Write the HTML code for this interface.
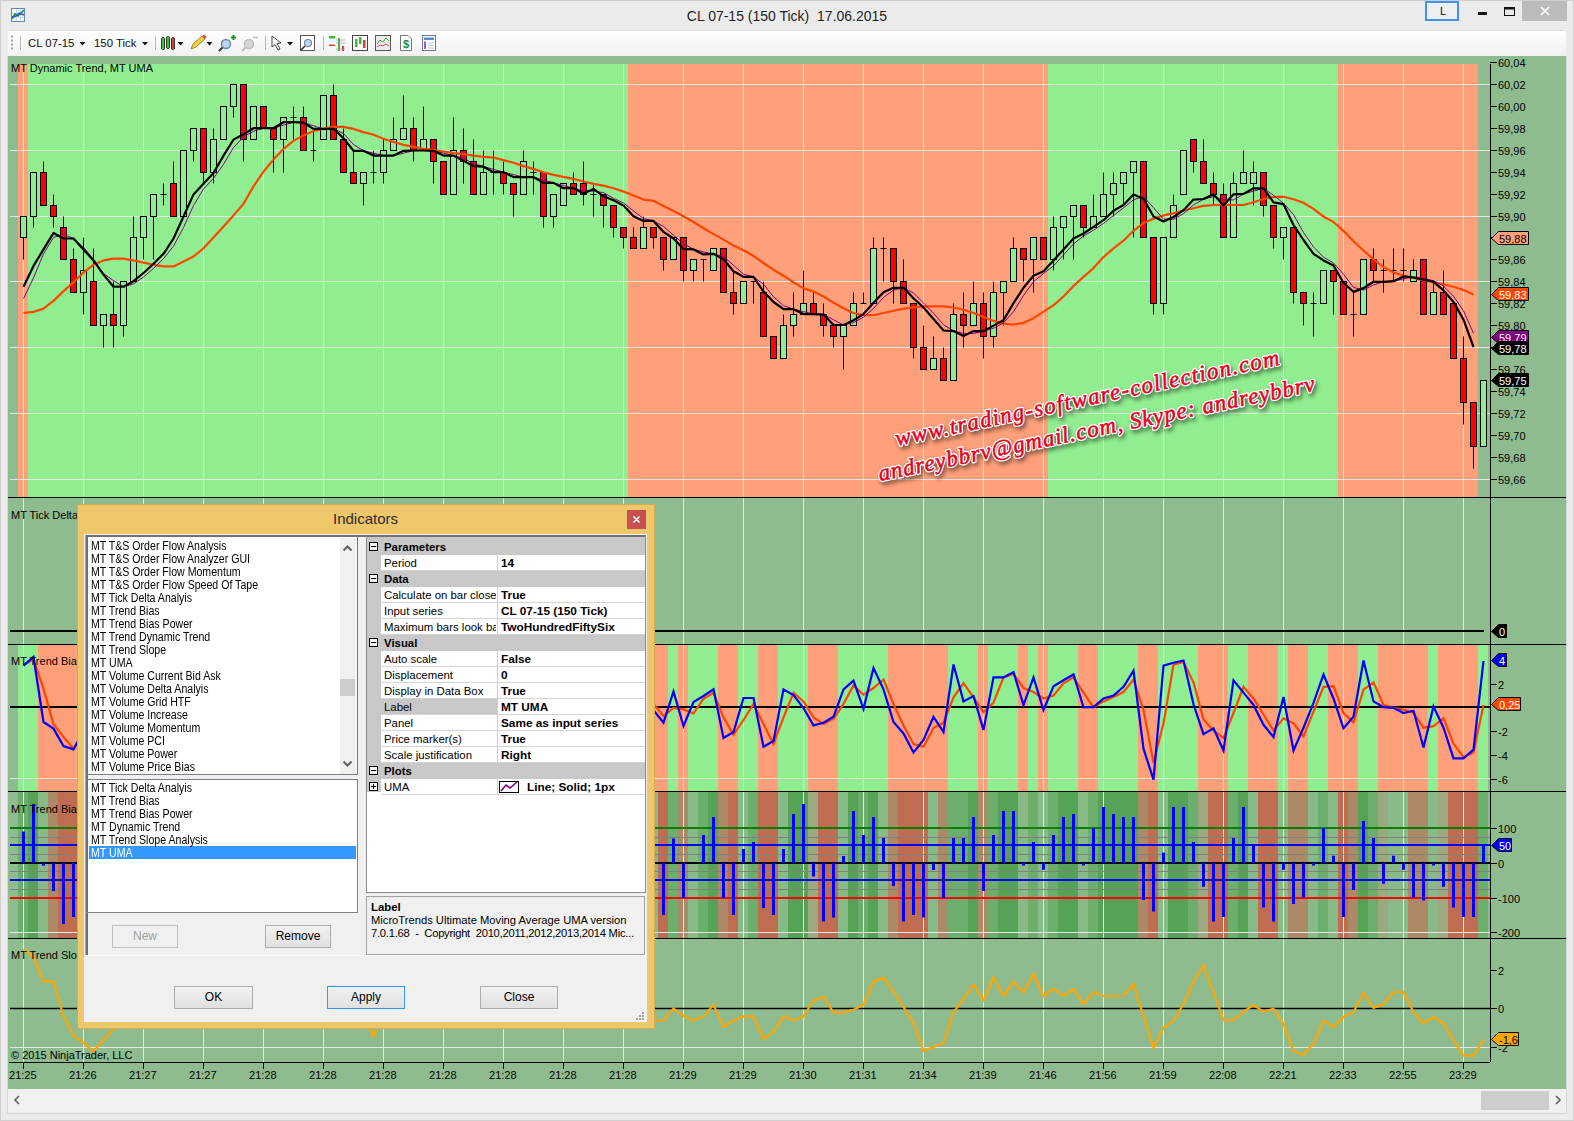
<!DOCTYPE html>
<html><head><meta charset="utf-8"><title>CL 07-15</title>
<style>
html,body{margin:0;padding:0;}
body{width:1574px;height:1121px;overflow:hidden;position:relative;background:#ebebeb;font-family:"Liberation Sans",sans-serif;}
svg{font-family:"Liberation Sans",sans-serif;}
.abs{position:absolute;}
</style></head><body>
<svg class="abs" style="left:0;top:0" width="1574" height="1121" viewBox="0 0 1574 1121">
<rect x="0" y="0" width="1574" height="1121" fill="#ebebeb"/>
<rect x="0.5" y="0.5" width="1573" height="1120" fill="none" stroke="#cfcfcf"/>
<defs><linearGradient id="tb" x1="0" y1="0" x2="0" y2="1"><stop offset="0" stop-color="#ffffff"/><stop offset="1" stop-color="#f0f0f0"/></linearGradient></defs>
<rect x="8" y="31" width="1558" height="25" fill="url(#tb)"/>
<rect x="8" y="56" width="1558" height="1033" fill="#8fbc8f"/>
<rect x="18" y="64" width="10" height="433" fill="#ffa07a"/>
<rect x="28" y="64" width="600" height="433" fill="#90ee90"/>
<rect x="628" y="64" width="420" height="433" fill="#ffa07a"/>
<rect x="1048" y="64" width="290" height="433" fill="#90ee90"/>
<rect x="1338" y="64" width="140" height="433" fill="#ffa07a"/>
<rect x="18" y="645" width="20" height="146" fill="#90ee90"/>
<rect x="38" y="645" width="630" height="146" fill="#ffa07a"/>
<rect x="668" y="645" width="10" height="146" fill="#90ee90"/>
<rect x="678" y="645" width="10" height="146" fill="#ffa07a"/>
<rect x="688" y="645" width="30" height="146" fill="#90ee90"/>
<rect x="718" y="645" width="20" height="146" fill="#ffa07a"/>
<rect x="738" y="645" width="20" height="146" fill="#90ee90"/>
<rect x="758" y="645" width="20" height="146" fill="#ffa07a"/>
<rect x="778" y="645" width="30" height="146" fill="#90ee90"/>
<rect x="808" y="645" width="30" height="146" fill="#ffa07a"/>
<rect x="838" y="645" width="50" height="146" fill="#90ee90"/>
<rect x="888" y="645" width="60" height="146" fill="#ffa07a"/>
<rect x="948" y="645" width="30" height="146" fill="#90ee90"/>
<rect x="978" y="645" width="10" height="146" fill="#ffa07a"/>
<rect x="988" y="645" width="30" height="146" fill="#90ee90"/>
<rect x="1018" y="645" width="10" height="146" fill="#ffa07a"/>
<rect x="1028" y="645" width="10" height="146" fill="#90ee90"/>
<rect x="1038" y="645" width="10" height="146" fill="#ffa07a"/>
<rect x="1048" y="645" width="30" height="146" fill="#90ee90"/>
<rect x="1078" y="645" width="20" height="146" fill="#ffa07a"/>
<rect x="1098" y="645" width="40" height="146" fill="#90ee90"/>
<rect x="1138" y="645" width="20" height="146" fill="#ffa07a"/>
<rect x="1158" y="645" width="40" height="146" fill="#90ee90"/>
<rect x="1198" y="645" width="30" height="146" fill="#ffa07a"/>
<rect x="1228" y="645" width="20" height="146" fill="#90ee90"/>
<rect x="1248" y="645" width="30" height="146" fill="#ffa07a"/>
<rect x="1278" y="645" width="10" height="146" fill="#90ee90"/>
<rect x="1288" y="645" width="20" height="146" fill="#ffa07a"/>
<rect x="1308" y="645" width="20" height="146" fill="#90ee90"/>
<rect x="1328" y="645" width="30" height="146" fill="#ffa07a"/>
<rect x="1358" y="645" width="20" height="146" fill="#90ee90"/>
<rect x="1378" y="645" width="50" height="146" fill="#ffa07a"/>
<rect x="1428" y="645" width="10" height="146" fill="#90ee90"/>
<rect x="1438" y="645" width="40" height="146" fill="#ffa07a"/>
<rect x="1478" y="645" width="10" height="146" fill="#90ee90"/>
<rect x="18" y="792" width="10" height="146" fill="#6cae6c"/>
<rect x="28" y="792" width="10" height="146" fill="#56a256"/>
<rect x="38" y="792" width="10" height="146" fill="#88ba88"/>
<rect x="48" y="792" width="10" height="146" fill="#ac8a68"/>
<rect x="58" y="792" width="10" height="146" fill="#c06c50"/>
<rect x="68" y="792" width="10" height="146" fill="#c06c50"/>
<rect x="78" y="792" width="10" height="146" fill="#88ba88"/>
<rect x="88" y="792" width="10" height="146" fill="#88ba88"/>
<rect x="98" y="792" width="10" height="146" fill="#88ba88"/>
<rect x="108" y="792" width="10" height="146" fill="#88ba88"/>
<rect x="118" y="792" width="10" height="146" fill="#88ba88"/>
<rect x="128" y="792" width="10" height="146" fill="#88ba88"/>
<rect x="138" y="792" width="10" height="146" fill="#88ba88"/>
<rect x="148" y="792" width="10" height="146" fill="#88ba88"/>
<rect x="158" y="792" width="10" height="146" fill="#88ba88"/>
<rect x="168" y="792" width="10" height="146" fill="#88ba88"/>
<rect x="178" y="792" width="10" height="146" fill="#88ba88"/>
<rect x="188" y="792" width="10" height="146" fill="#88ba88"/>
<rect x="198" y="792" width="10" height="146" fill="#88ba88"/>
<rect x="208" y="792" width="10" height="146" fill="#88ba88"/>
<rect x="218" y="792" width="10" height="146" fill="#88ba88"/>
<rect x="228" y="792" width="10" height="146" fill="#88ba88"/>
<rect x="238" y="792" width="10" height="146" fill="#88ba88"/>
<rect x="248" y="792" width="10" height="146" fill="#88ba88"/>
<rect x="258" y="792" width="10" height="146" fill="#88ba88"/>
<rect x="268" y="792" width="10" height="146" fill="#88ba88"/>
<rect x="278" y="792" width="10" height="146" fill="#88ba88"/>
<rect x="288" y="792" width="10" height="146" fill="#88ba88"/>
<rect x="298" y="792" width="10" height="146" fill="#88ba88"/>
<rect x="308" y="792" width="10" height="146" fill="#88ba88"/>
<rect x="318" y="792" width="10" height="146" fill="#88ba88"/>
<rect x="328" y="792" width="10" height="146" fill="#88ba88"/>
<rect x="338" y="792" width="10" height="146" fill="#88ba88"/>
<rect x="348" y="792" width="10" height="146" fill="#88ba88"/>
<rect x="358" y="792" width="10" height="146" fill="#88ba88"/>
<rect x="368" y="792" width="10" height="146" fill="#88ba88"/>
<rect x="378" y="792" width="10" height="146" fill="#88ba88"/>
<rect x="388" y="792" width="10" height="146" fill="#88ba88"/>
<rect x="398" y="792" width="10" height="146" fill="#88ba88"/>
<rect x="408" y="792" width="10" height="146" fill="#88ba88"/>
<rect x="418" y="792" width="10" height="146" fill="#88ba88"/>
<rect x="428" y="792" width="10" height="146" fill="#88ba88"/>
<rect x="438" y="792" width="10" height="146" fill="#88ba88"/>
<rect x="448" y="792" width="10" height="146" fill="#88ba88"/>
<rect x="458" y="792" width="10" height="146" fill="#88ba88"/>
<rect x="468" y="792" width="10" height="146" fill="#88ba88"/>
<rect x="478" y="792" width="10" height="146" fill="#88ba88"/>
<rect x="488" y="792" width="10" height="146" fill="#88ba88"/>
<rect x="498" y="792" width="10" height="146" fill="#88ba88"/>
<rect x="508" y="792" width="10" height="146" fill="#88ba88"/>
<rect x="518" y="792" width="10" height="146" fill="#88ba88"/>
<rect x="528" y="792" width="10" height="146" fill="#88ba88"/>
<rect x="538" y="792" width="10" height="146" fill="#88ba88"/>
<rect x="548" y="792" width="10" height="146" fill="#88ba88"/>
<rect x="558" y="792" width="10" height="146" fill="#88ba88"/>
<rect x="568" y="792" width="10" height="146" fill="#88ba88"/>
<rect x="578" y="792" width="10" height="146" fill="#88ba88"/>
<rect x="588" y="792" width="10" height="146" fill="#88ba88"/>
<rect x="598" y="792" width="10" height="146" fill="#88ba88"/>
<rect x="608" y="792" width="10" height="146" fill="#88ba88"/>
<rect x="618" y="792" width="10" height="146" fill="#88ba88"/>
<rect x="628" y="792" width="10" height="146" fill="#88ba88"/>
<rect x="638" y="792" width="10" height="146" fill="#88ba88"/>
<rect x="648" y="792" width="10" height="146" fill="#88ba88"/>
<rect x="658" y="792" width="10" height="146" fill="#c06c50"/>
<rect x="668" y="792" width="10" height="146" fill="#6cae6c"/>
<rect x="678" y="792" width="10" height="146" fill="#ac8a68"/>
<rect x="688" y="792" width="10" height="146" fill="#88ba88"/>
<rect x="698" y="792" width="10" height="146" fill="#6cae6c"/>
<rect x="708" y="792" width="10" height="146" fill="#56a256"/>
<rect x="718" y="792" width="10" height="146" fill="#ac8a68"/>
<rect x="728" y="792" width="10" height="146" fill="#c06c50"/>
<rect x="738" y="792" width="10" height="146" fill="#88ba88"/>
<rect x="748" y="792" width="10" height="146" fill="#6cae6c"/>
<rect x="758" y="792" width="10" height="146" fill="#c06c50"/>
<rect x="768" y="792" width="10" height="146" fill="#c06c50"/>
<rect x="778" y="792" width="10" height="146" fill="#88ba88"/>
<rect x="788" y="792" width="10" height="146" fill="#56a256"/>
<rect x="798" y="792" width="10" height="146" fill="#56a256"/>
<rect x="808" y="792" width="10" height="146" fill="#9ca880"/>
<rect x="818" y="792" width="10" height="146" fill="#c06c50"/>
<rect x="828" y="792" width="10" height="146" fill="#c06c50"/>
<rect x="838" y="792" width="10" height="146" fill="#88ba88"/>
<rect x="848" y="792" width="10" height="146" fill="#56a256"/>
<rect x="858" y="792" width="10" height="146" fill="#6cae6c"/>
<rect x="868" y="792" width="10" height="146" fill="#56a256"/>
<rect x="878" y="792" width="10" height="146" fill="#88ba88"/>
<rect x="888" y="792" width="10" height="146" fill="#ac8a68"/>
<rect x="898" y="792" width="10" height="146" fill="#c06c50"/>
<rect x="908" y="792" width="10" height="146" fill="#c06c50"/>
<rect x="918" y="792" width="10" height="146" fill="#c06c50"/>
<rect x="928" y="792" width="10" height="146" fill="#88ba88"/>
<rect x="938" y="792" width="10" height="146" fill="#ac8a68"/>
<rect x="948" y="792" width="10" height="146" fill="#6cae6c"/>
<rect x="958" y="792" width="10" height="146" fill="#6cae6c"/>
<rect x="968" y="792" width="10" height="146" fill="#56a256"/>
<rect x="978" y="792" width="10" height="146" fill="#ac8a68"/>
<rect x="988" y="792" width="10" height="146" fill="#6cae6c"/>
<rect x="998" y="792" width="10" height="146" fill="#56a256"/>
<rect x="1008" y="792" width="10" height="146" fill="#56a256"/>
<rect x="1018" y="792" width="10" height="146" fill="#88ba88"/>
<rect x="1028" y="792" width="10" height="146" fill="#6cae6c"/>
<rect x="1038" y="792" width="10" height="146" fill="#88ba88"/>
<rect x="1048" y="792" width="10" height="146" fill="#6cae6c"/>
<rect x="1058" y="792" width="10" height="146" fill="#56a256"/>
<rect x="1068" y="792" width="10" height="146" fill="#56a256"/>
<rect x="1078" y="792" width="10" height="146" fill="#88ba88"/>
<rect x="1088" y="792" width="10" height="146" fill="#6cae6c"/>
<rect x="1098" y="792" width="10" height="146" fill="#56a256"/>
<rect x="1108" y="792" width="10" height="146" fill="#56a256"/>
<rect x="1118" y="792" width="10" height="146" fill="#56a256"/>
<rect x="1128" y="792" width="10" height="146" fill="#56a256"/>
<rect x="1138" y="792" width="10" height="146" fill="#ac8a68"/>
<rect x="1148" y="792" width="10" height="146" fill="#c06c50"/>
<rect x="1158" y="792" width="10" height="146" fill="#88ba88"/>
<rect x="1168" y="792" width="10" height="146" fill="#56a256"/>
<rect x="1178" y="792" width="10" height="146" fill="#56a256"/>
<rect x="1188" y="792" width="10" height="146" fill="#6cae6c"/>
<rect x="1198" y="792" width="10" height="146" fill="#9ca880"/>
<rect x="1208" y="792" width="10" height="146" fill="#c06c50"/>
<rect x="1218" y="792" width="10" height="146" fill="#c06c50"/>
<rect x="1228" y="792" width="10" height="146" fill="#6cae6c"/>
<rect x="1238" y="792" width="10" height="146" fill="#56a256"/>
<rect x="1248" y="792" width="10" height="146" fill="#88ba88"/>
<rect x="1258" y="792" width="10" height="146" fill="#c06c50"/>
<rect x="1268" y="792" width="10" height="146" fill="#c06c50"/>
<rect x="1278" y="792" width="10" height="146" fill="#88ba88"/>
<rect x="1288" y="792" width="10" height="146" fill="#ac8a68"/>
<rect x="1298" y="792" width="10" height="146" fill="#ac8a68"/>
<rect x="1308" y="792" width="10" height="146" fill="#88ba88"/>
<rect x="1318" y="792" width="10" height="146" fill="#6cae6c"/>
<rect x="1328" y="792" width="10" height="146" fill="#88ba88"/>
<rect x="1338" y="792" width="10" height="146" fill="#c06c50"/>
<rect x="1348" y="792" width="10" height="146" fill="#ac8a68"/>
<rect x="1358" y="792" width="10" height="146" fill="#56a256"/>
<rect x="1368" y="792" width="10" height="146" fill="#6cae6c"/>
<rect x="1378" y="792" width="10" height="146" fill="#9ca880"/>
<rect x="1388" y="792" width="10" height="146" fill="#88ba88"/>
<rect x="1398" y="792" width="10" height="146" fill="#88ba88"/>
<rect x="1408" y="792" width="10" height="146" fill="#ac8a68"/>
<rect x="1418" y="792" width="10" height="146" fill="#ac8a68"/>
<rect x="1428" y="792" width="10" height="146" fill="#88ba88"/>
<rect x="1438" y="792" width="10" height="146" fill="#9ca880"/>
<rect x="1448" y="792" width="10" height="146" fill="#c06c50"/>
<rect x="1458" y="792" width="10" height="146" fill="#c06c50"/>
<rect x="1468" y="792" width="10" height="146" fill="#c06c50"/>
<rect x="1478" y="792" width="10" height="146" fill="#6cae6c"/>
<path d="M23.5 64V1062 M83.5 64V1062 M143.5 64V1062 M203.5 64V1062 M263.5 64V1062 M323.5 64V1062 M383.5 64V1062 M443.5 64V1062 M503.5 64V1062 M563.5 64V1062 M623.5 64V1062 M683.5 64V1062 M743.5 64V1062 M803.5 64V1062 M863.5 64V1062 M923.5 64V1062 M983.5 64V1062 M1043.5 64V1062 M1103.5 64V1062 M1163.5 64V1062 M1223.5 64V1062 M1283.5 64V1062 M1343.5 64V1062 M1403.5 64V1062 M1463.5 64V1062" stroke="#e6e6e6" fill="none"/>
<path d="M10 84.5H1490 M10 150.5H1490 M10 216.5H1490 M10 281.5H1490 M10 347.5H1490 M10 413.5H1490 M10 479.5H1490 M10 778.5H1490 M10 932.5H1490 M10 1047.5H1490" stroke="#e6e6e6" fill="none"/>
<path d="M23.5 216.5V259.5 M33.5 172.5V227.5 M43.5 161.5V205.5 M53.5 194.5V227.5 M63.5 216.5V259.5 M73.5 248.5V292.5 M83.5 237.5V314.5 M93.5 248.5V325.5 M103.5 314.5V347.5 M113.5 281.5V347.5 M123.5 281.5V336.5 M133.5 216.5V281.5 M143.5 216.5V259.5 M153.5 194.5V259.5 M163.5 183.5V205.5 M173.5 161.5V216.5 M183.5 150.5V216.5 M193.5 128.5V161.5 M203.5 128.5V183.5 M213.5 128.5V183.5 M223.5 106.5V139.5 M233.5 84.5V117.5 M243.5 84.5V161.5 M253.5 106.5V139.5 M263.5 106.5V128.5 M273.5 128.5V172.5 M283.5 117.5V172.5 M293.5 106.5V139.5 M303.5 106.5V150.5 M313.5 128.5V161.5 M323.5 95.5V139.5 M333.5 84.5V139.5 M343.5 128.5V172.5 M353.5 150.5V183.5 M363.5 172.5V205.5 M373.5 150.5V183.5 M383.5 139.5V183.5 M393.5 117.5V150.5 M403.5 95.5V139.5 M413.5 117.5V161.5 M423.5 106.5V150.5 M433.5 139.5V183.5 M443.5 161.5V194.5 M453.5 117.5V194.5 M463.5 128.5V183.5 M473.5 139.5V194.5 M483.5 150.5V194.5 M493.5 150.5V194.5 M503.5 161.5V194.5 M513.5 183.5V216.5 M523.5 150.5V194.5 M533.5 161.5V194.5 M543.5 172.5V227.5 M553.5 194.5V227.5 M563.5 183.5V205.5 M573.5 172.5V194.5 M583.5 161.5V205.5 M593.5 183.5V216.5 M603.5 194.5V227.5 M613.5 205.5V237.5 M623.5 227.5V248.5 M633.5 227.5V248.5 M643.5 216.5V248.5 M653.5 227.5V248.5 M663.5 237.5V270.5 M673.5 237.5V259.5 M683.5 237.5V281.5 M693.5 259.5V281.5 M703.5 259.5V281.5 M713.5 248.5V270.5 M723.5 248.5V292.5 M733.5 270.5V314.5 M743.5 281.5V303.5 M753.5 281.5V303.5 M763.5 281.5V336.5 M773.5 336.5V358.5 M783.5 314.5V358.5 M793.5 292.5V336.5 M803.5 270.5V314.5 M813.5 292.5V314.5 M823.5 303.5V336.5 M833.5 325.5V347.5 M843.5 325.5V369.5 M853.5 292.5V325.5 M863.5 292.5V303.5 M873.5 237.5V303.5 M883.5 237.5V281.5 M893.5 248.5V303.5 M903.5 259.5V303.5 M913.5 303.5V358.5 M923.5 325.5V369.5 M933.5 336.5V369.5 M943.5 347.5V380.5 M953.5 303.5V380.5 M963.5 292.5V347.5 M973.5 281.5V325.5 M983.5 292.5V358.5 M993.5 281.5V347.5 M1003.5 281.5V325.5 M1013.5 237.5V281.5 M1023.5 248.5V281.5 M1033.5 237.5V292.5 M1043.5 237.5V259.5 M1053.5 216.5V270.5 M1063.5 216.5V259.5 M1073.5 205.5V259.5 M1083.5 205.5V237.5 M1093.5 194.5V227.5 M1103.5 172.5V216.5 M1113.5 172.5V216.5 M1123.5 172.5V205.5 M1133.5 161.5V237.5 M1143.5 161.5V237.5 M1153.5 237.5V314.5 M1163.5 237.5V314.5 M1173.5 194.5V237.5 M1183.5 150.5V194.5 M1193.5 139.5V172.5 M1203.5 139.5V183.5 M1213.5 172.5V205.5 M1223.5 183.5V237.5 M1233.5 172.5V237.5 M1243.5 150.5V183.5 M1253.5 161.5V205.5 M1263.5 172.5V216.5 M1273.5 205.5V248.5 M1283.5 227.5V259.5 M1293.5 227.5V303.5 M1303.5 292.5V325.5 M1313.5 292.5V336.5 M1323.5 270.5V303.5 M1333.5 270.5V314.5 M1343.5 281.5V314.5 M1353.5 292.5V336.5 M1363.5 259.5V314.5 M1373.5 248.5V281.5 M1383.5 259.5V292.5 M1393.5 248.5V281.5 M1403.5 248.5V281.5 M1413.5 259.5V281.5 M1423.5 259.5V314.5 M1433.5 281.5V314.5 M1443.5 270.5V314.5 M1453.5 303.5V358.5 M1463.5 336.5V424.5 M1473.5 402.5V468.5 M1483.5 380.5V446.5" stroke="#000" fill="none"/>
<rect x="20.5" y="216.5" width="6" height="21.0" fill="#90ee90" stroke="#000"/>
<rect x="30.5" y="172.5" width="6" height="44.0" fill="#90ee90" stroke="#000"/>
<rect x="40.5" y="172.5" width="6" height="33.0" fill="#ff0000" stroke="#000"/>
<rect x="50.5" y="205.5" width="6" height="11.0" fill="#ff0000" stroke="#000"/>
<rect x="60.5" y="227.5" width="6" height="32.0" fill="#ff0000" stroke="#000"/>
<rect x="70.5" y="259.5" width="6" height="33.0" fill="#ff0000" stroke="#000"/>
<rect x="80.5" y="270.5" width="6" height="22.0" fill="#90ee90" stroke="#000"/>
<rect x="90.5" y="281.5" width="6" height="44.0" fill="#ff0000" stroke="#000"/>
<rect x="100.5" y="314.5" width="6" height="11.0" fill="#90ee90" stroke="#000"/>
<rect x="110.5" y="314.5" width="6" height="11.0" fill="#ff0000" stroke="#000"/>
<rect x="120.5" y="281.5" width="6" height="44.0" fill="#90ee90" stroke="#000"/>
<rect x="130.5" y="237.5" width="6" height="44.0" fill="#90ee90" stroke="#000"/>
<rect x="140.5" y="216.5" width="6" height="21.0" fill="#90ee90" stroke="#000"/>
<rect x="150.5" y="194.5" width="6" height="22.0" fill="#90ee90" stroke="#000"/>
<path d="M160.5 194.5H166.5" stroke="#000"/>
<rect x="170.5" y="183.5" width="6" height="33.0" fill="#ff0000" stroke="#000"/>
<rect x="180.5" y="150.5" width="6" height="66.0" fill="#90ee90" stroke="#000"/>
<rect x="190.5" y="128.5" width="6" height="22.0" fill="#90ee90" stroke="#000"/>
<rect x="200.5" y="128.5" width="6" height="44.0" fill="#ff0000" stroke="#000"/>
<rect x="210.5" y="139.5" width="6" height="33.0" fill="#90ee90" stroke="#000"/>
<rect x="220.5" y="106.5" width="6" height="33.0" fill="#90ee90" stroke="#000"/>
<rect x="230.5" y="84.5" width="6" height="22.0" fill="#90ee90" stroke="#000"/>
<rect x="240.5" y="84.5" width="6" height="55.0" fill="#ff0000" stroke="#000"/>
<rect x="250.5" y="106.5" width="6" height="33.0" fill="#90ee90" stroke="#000"/>
<rect x="260.5" y="106.5" width="6" height="22.0" fill="#ff0000" stroke="#000"/>
<rect x="270.5" y="128.5" width="6" height="11.0" fill="#ff0000" stroke="#000"/>
<rect x="280.5" y="117.5" width="6" height="22.0" fill="#90ee90" stroke="#000"/>
<path d="M290.5 117.5H296.5" stroke="#000"/>
<rect x="300.5" y="117.5" width="6" height="33.0" fill="#ff0000" stroke="#000"/>
<path d="M310.5 150.5H316.5" stroke="#000"/>
<rect x="320.5" y="95.5" width="6" height="44.0" fill="#90ee90" stroke="#000"/>
<rect x="330.5" y="95.5" width="6" height="44.0" fill="#ff0000" stroke="#000"/>
<rect x="340.5" y="139.5" width="6" height="33.0" fill="#ff0000" stroke="#000"/>
<rect x="350.5" y="172.5" width="6" height="11.0" fill="#ff0000" stroke="#000"/>
<rect x="360.5" y="172.5" width="6" height="11.0" fill="#90ee90" stroke="#000"/>
<path d="M370.5 172.5H376.5" stroke="#000"/>
<rect x="380.5" y="150.5" width="6" height="22.0" fill="#90ee90" stroke="#000"/>
<rect x="390.5" y="139.5" width="6" height="11.0" fill="#90ee90" stroke="#000"/>
<rect x="400.5" y="128.5" width="6" height="11.0" fill="#90ee90" stroke="#000"/>
<rect x="410.5" y="128.5" width="6" height="22.0" fill="#ff0000" stroke="#000"/>
<rect x="420.5" y="139.5" width="6" height="11.0" fill="#90ee90" stroke="#000"/>
<rect x="430.5" y="139.5" width="6" height="22.0" fill="#ff0000" stroke="#000"/>
<rect x="440.5" y="161.5" width="6" height="33.0" fill="#ff0000" stroke="#000"/>
<rect x="450.5" y="150.5" width="6" height="44.0" fill="#90ee90" stroke="#000"/>
<rect x="460.5" y="150.5" width="6" height="11.0" fill="#ff0000" stroke="#000"/>
<rect x="470.5" y="161.5" width="6" height="33.0" fill="#ff0000" stroke="#000"/>
<rect x="480.5" y="172.5" width="6" height="22.0" fill="#90ee90" stroke="#000"/>
<path d="M490.5 172.5H496.5" stroke="#000"/>
<rect x="500.5" y="172.5" width="6" height="11.0" fill="#ff0000" stroke="#000"/>
<rect x="510.5" y="183.5" width="6" height="11.0" fill="#ff0000" stroke="#000"/>
<rect x="520.5" y="161.5" width="6" height="33.0" fill="#90ee90" stroke="#000"/>
<path d="M530.5 172.5H536.5" stroke="#000"/>
<rect x="540.5" y="172.5" width="6" height="44.0" fill="#ff0000" stroke="#000"/>
<rect x="550.5" y="194.5" width="6" height="22.0" fill="#90ee90" stroke="#000"/>
<rect x="560.5" y="183.5" width="6" height="22.0" fill="#90ee90" stroke="#000"/>
<rect x="570.5" y="183.5" width="6" height="11.0" fill="#ff0000" stroke="#000"/>
<rect x="580.5" y="183.5" width="6" height="11.0" fill="#ff0000" stroke="#000"/>
<path d="M590.5 194.5H596.5" stroke="#000"/>
<rect x="600.5" y="194.5" width="6" height="11.0" fill="#ff0000" stroke="#000"/>
<rect x="610.5" y="205.5" width="6" height="22.0" fill="#ff0000" stroke="#000"/>
<rect x="620.5" y="227.5" width="6" height="10.0" fill="#ff0000" stroke="#000"/>
<rect x="630.5" y="237.5" width="6" height="11.0" fill="#ff0000" stroke="#000"/>
<rect x="640.5" y="227.5" width="6" height="21.0" fill="#90ee90" stroke="#000"/>
<rect x="650.5" y="227.5" width="6" height="10.0" fill="#ff0000" stroke="#000"/>
<rect x="660.5" y="237.5" width="6" height="22.0" fill="#ff0000" stroke="#000"/>
<rect x="670.5" y="237.5" width="6" height="22.0" fill="#90ee90" stroke="#000"/>
<rect x="680.5" y="237.5" width="6" height="33.0" fill="#ff0000" stroke="#000"/>
<rect x="690.5" y="259.5" width="6" height="11.0" fill="#90ee90" stroke="#000"/>
<path d="M700.5 259.5H706.5" stroke="#000"/>
<rect x="710.5" y="248.5" width="6" height="22.0" fill="#90ee90" stroke="#000"/>
<rect x="720.5" y="248.5" width="6" height="44.0" fill="#ff0000" stroke="#000"/>
<rect x="730.5" y="292.5" width="6" height="11.0" fill="#ff0000" stroke="#000"/>
<rect x="740.5" y="281.5" width="6" height="22.0" fill="#90ee90" stroke="#000"/>
<path d="M750.5 281.5H756.5" stroke="#000"/>
<rect x="760.5" y="292.5" width="6" height="44.0" fill="#ff0000" stroke="#000"/>
<rect x="770.5" y="336.5" width="6" height="22.0" fill="#ff0000" stroke="#000"/>
<rect x="780.5" y="325.5" width="6" height="33.0" fill="#90ee90" stroke="#000"/>
<rect x="790.5" y="314.5" width="6" height="11.0" fill="#90ee90" stroke="#000"/>
<rect x="800.5" y="303.5" width="6" height="11.0" fill="#90ee90" stroke="#000"/>
<rect x="810.5" y="303.5" width="6" height="11.0" fill="#ff0000" stroke="#000"/>
<rect x="820.5" y="314.5" width="6" height="11.0" fill="#ff0000" stroke="#000"/>
<rect x="830.5" y="325.5" width="6" height="11.0" fill="#ff0000" stroke="#000"/>
<rect x="840.5" y="325.5" width="6" height="11.0" fill="#90ee90" stroke="#000"/>
<rect x="850.5" y="303.5" width="6" height="22.0" fill="#90ee90" stroke="#000"/>
<path d="M860.5 303.5H866.5" stroke="#000"/>
<rect x="870.5" y="248.5" width="6" height="55.0" fill="#90ee90" stroke="#000"/>
<path d="M880.5 248.5H886.5" stroke="#000"/>
<rect x="890.5" y="248.5" width="6" height="33.0" fill="#ff0000" stroke="#000"/>
<rect x="900.5" y="281.5" width="6" height="22.0" fill="#ff0000" stroke="#000"/>
<rect x="910.5" y="303.5" width="6" height="44.0" fill="#ff0000" stroke="#000"/>
<rect x="920.5" y="347.5" width="6" height="22.0" fill="#ff0000" stroke="#000"/>
<rect x="930.5" y="358.5" width="6" height="11.0" fill="#90ee90" stroke="#000"/>
<rect x="940.5" y="358.5" width="6" height="22.0" fill="#ff0000" stroke="#000"/>
<rect x="950.5" y="314.5" width="6" height="66.0" fill="#90ee90" stroke="#000"/>
<rect x="960.5" y="314.5" width="6" height="11.0" fill="#ff0000" stroke="#000"/>
<rect x="970.5" y="303.5" width="6" height="22.0" fill="#90ee90" stroke="#000"/>
<rect x="980.5" y="303.5" width="6" height="33.0" fill="#ff0000" stroke="#000"/>
<rect x="990.5" y="292.5" width="6" height="44.0" fill="#90ee90" stroke="#000"/>
<rect x="1000.5" y="281.5" width="6" height="11.0" fill="#90ee90" stroke="#000"/>
<rect x="1010.5" y="248.5" width="6" height="33.0" fill="#90ee90" stroke="#000"/>
<rect x="1020.5" y="248.5" width="6" height="11.0" fill="#ff0000" stroke="#000"/>
<rect x="1030.5" y="237.5" width="6" height="22.0" fill="#90ee90" stroke="#000"/>
<rect x="1040.5" y="237.5" width="6" height="22.0" fill="#ff0000" stroke="#000"/>
<rect x="1050.5" y="227.5" width="6" height="32.0" fill="#90ee90" stroke="#000"/>
<rect x="1060.5" y="216.5" width="6" height="11.0" fill="#90ee90" stroke="#000"/>
<rect x="1070.5" y="205.5" width="6" height="11.0" fill="#90ee90" stroke="#000"/>
<rect x="1080.5" y="205.5" width="6" height="22.0" fill="#ff0000" stroke="#000"/>
<rect x="1090.5" y="216.5" width="6" height="11.0" fill="#90ee90" stroke="#000"/>
<rect x="1100.5" y="194.5" width="6" height="22.0" fill="#90ee90" stroke="#000"/>
<rect x="1110.5" y="183.5" width="6" height="11.0" fill="#90ee90" stroke="#000"/>
<rect x="1120.5" y="172.5" width="6" height="11.0" fill="#90ee90" stroke="#000"/>
<rect x="1130.5" y="161.5" width="6" height="11.0" fill="#90ee90" stroke="#000"/>
<rect x="1140.5" y="161.5" width="6" height="76.0" fill="#ff0000" stroke="#000"/>
<rect x="1150.5" y="237.5" width="6" height="66.0" fill="#ff0000" stroke="#000"/>
<rect x="1160.5" y="237.5" width="6" height="66.0" fill="#90ee90" stroke="#000"/>
<rect x="1170.5" y="205.5" width="6" height="32.0" fill="#90ee90" stroke="#000"/>
<rect x="1180.5" y="150.5" width="6" height="44.0" fill="#90ee90" stroke="#000"/>
<rect x="1190.5" y="139.5" width="6" height="22.0" fill="#ff0000" stroke="#000"/>
<rect x="1200.5" y="161.5" width="6" height="22.0" fill="#ff0000" stroke="#000"/>
<rect x="1210.5" y="183.5" width="6" height="11.0" fill="#ff0000" stroke="#000"/>
<rect x="1220.5" y="194.5" width="6" height="43.0" fill="#ff0000" stroke="#000"/>
<rect x="1230.5" y="183.5" width="6" height="54.0" fill="#90ee90" stroke="#000"/>
<rect x="1240.5" y="172.5" width="6" height="11.0" fill="#90ee90" stroke="#000"/>
<rect x="1250.5" y="172.5" width="6" height="11.0" fill="#90ee90" stroke="#000"/>
<rect x="1260.5" y="172.5" width="6" height="33.0" fill="#ff0000" stroke="#000"/>
<rect x="1270.5" y="205.5" width="6" height="32.0" fill="#ff0000" stroke="#000"/>
<rect x="1280.5" y="227.5" width="6" height="10.0" fill="#90ee90" stroke="#000"/>
<rect x="1290.5" y="227.5" width="6" height="65.0" fill="#ff0000" stroke="#000"/>
<rect x="1300.5" y="292.5" width="6" height="11.0" fill="#ff0000" stroke="#000"/>
<path d="M1310.5 303.5H1316.5" stroke="#000"/>
<rect x="1320.5" y="270.5" width="6" height="33.0" fill="#90ee90" stroke="#000"/>
<rect x="1330.5" y="270.5" width="6" height="11.0" fill="#ff0000" stroke="#000"/>
<rect x="1340.5" y="281.5" width="6" height="33.0" fill="#ff0000" stroke="#000"/>
<path d="M1350.5 314.5H1356.5" stroke="#000"/>
<rect x="1360.5" y="259.5" width="6" height="55.0" fill="#90ee90" stroke="#000"/>
<rect x="1370.5" y="259.5" width="6" height="11.0" fill="#ff0000" stroke="#000"/>
<path d="M1380.5 270.5H1386.5" stroke="#000"/>
<path d="M1390.5 270.5H1396.5" stroke="#000"/>
<path d="M1400.5 270.5H1406.5" stroke="#000"/>
<rect x="1410.5" y="270.5" width="6" height="11.0" fill="#90ee90" stroke="#000"/>
<rect x="1420.5" y="259.5" width="6" height="55.0" fill="#ff0000" stroke="#000"/>
<rect x="1430.5" y="292.5" width="6" height="22.0" fill="#90ee90" stroke="#000"/>
<rect x="1440.5" y="292.5" width="6" height="22.0" fill="#ff0000" stroke="#000"/>
<rect x="1450.5" y="303.5" width="6" height="55.0" fill="#ff0000" stroke="#000"/>
<rect x="1460.5" y="358.5" width="6" height="44.0" fill="#ff0000" stroke="#000"/>
<rect x="1470.5" y="402.5" width="6" height="44.0" fill="#ff0000" stroke="#000"/>
<rect x="1480.5" y="380.5" width="6" height="66.0" fill="#90ee90" stroke="#000"/>
<polyline points="23.5,313.0 33.5,311.9 43.5,308.6 53.5,300.9 63.5,291.1 73.5,282.3 83.5,272.4 93.5,264.8 103.5,260.4 113.5,258.7 123.5,258.7 133.5,260.4 143.5,262.6 153.5,264.8 163.5,266.4 173.5,266.4 183.5,261.5 193.5,256.5 203.5,248.3 213.5,237.4 223.5,226.4 233.5,215.4 243.5,203.8 253.5,186.4 263.5,171.6 273.5,159.5 283.5,148.9 293.5,140.9 303.5,135.4 313.5,130.9 323.5,128.9 333.5,126.8 343.5,126.8 353.5,128.9 363.5,132.1 373.5,134.8 383.5,138.7 393.5,142.0 403.5,144.9 413.5,146.9 423.5,148.9 433.5,150.2 443.5,151.5 453.5,153.1 463.5,154.1 473.5,155.6 483.5,156.9 493.5,157.5 503.5,160.1 513.5,162.8 523.5,166.1 533.5,168.9 543.5,172.2 553.5,174.9 563.5,176.9 573.5,178.9 583.5,181.5 593.5,183.9 603.5,185.6 613.5,188.2 623.5,191.6 633.5,195.6 643.5,199.6 653.5,200.8 663.5,206.1 673.5,211.1 683.5,216.2 693.5,222.0 703.5,228.2 713.5,234.1 723.5,239.6 733.5,245.6 743.5,250.3 753.5,256.0 763.5,263.0 773.5,269.7 783.5,275.7 793.5,282.3 803.5,288.4 813.5,291.5 823.5,296.5 833.5,302.8 843.5,308.2 853.5,313.0 863.5,315.2 873.5,315.2 883.5,313.0 893.5,310.8 903.5,308.6 913.5,307.3 923.5,306.4 933.5,306.4 943.5,306.4 953.5,307.5 963.5,309.7 973.5,313.0 983.5,316.9 993.5,320.9 1003.5,323.6 1013.5,324.6 1023.5,322.9 1033.5,318.2 1043.5,311.7 1053.5,305.3 1063.5,296.5 1073.5,286.1 1083.5,276.8 1093.5,268.1 1103.5,257.1 1113.5,248.3 1123.5,240.7 1133.5,230.8 1143.5,223.1 1153.5,218.7 1163.5,215.4 1173.5,213.3 1183.5,210.5 1193.5,208.3 1203.5,205.9 1213.5,205.0 1223.5,205.0 1233.5,205.0 1243.5,205.0 1253.5,202.3 1263.5,199.0 1273.5,197.0 1283.5,196.7 1293.5,199.2 1303.5,202.8 1313.5,208.9 1323.5,216.5 1333.5,222.0 1343.5,230.8 1353.5,241.3 1363.5,250.5 1373.5,259.3 1383.5,267.0 1393.5,272.4 1403.5,275.7 1413.5,277.9 1423.5,280.1 1433.5,282.3 1443.5,284.5 1453.5,286.7 1463.5,290.0 1473.5,294.4" fill="none" stroke="#ff4500" stroke-width="2.2" stroke-linejoin="round"/>
<polyline points="23.5,298.7 33.5,277.9 43.5,253.8 53.5,237.4 63.5,234.1 73.5,238.5 83.5,247.2 93.5,259.3 103.5,273.5 113.5,280.7 123.5,286.7 133.5,283.9 143.5,277.1 153.5,268.3 163.5,258.7 173.5,246.1 183.5,227.5 193.5,205.5 203.5,189.0 213.5,178.3 223.5,164.3 233.5,147.6 243.5,136.9 253.5,131.2 263.5,128.2 273.5,128.2 283.5,125.2 293.5,122.2 303.5,122.4 313.5,125.8 323.5,128.9 333.5,128.9 343.5,133.5 353.5,144.5 363.5,150.8 373.5,153.2 383.5,155.6 393.5,155.6 403.5,153.2 413.5,150.6 423.5,150.5 433.5,150.6 443.5,153.2 453.5,155.6 463.5,158.2 473.5,163.5 483.5,166.4 493.5,169.4 503.5,172.2 513.5,174.6 523.5,177.1 533.5,177.1 543.5,180.0 553.5,182.9 563.5,185.5 573.5,188.2 583.5,190.8 593.5,191.2 603.5,192.6 613.5,198.3 623.5,202.9 633.5,211.0 643.5,218.6 653.5,220.9 663.5,226.4 673.5,235.2 683.5,243.7 693.5,249.1 703.5,251.9 713.5,254.1 723.5,256.5 733.5,265.3 743.5,274.1 753.5,276.8 763.5,284.2 773.5,296.8 783.5,305.6 793.5,309.2 803.5,311.6 813.5,314.1 823.5,314.4 833.5,319.8 843.5,325.0 853.5,322.6 863.5,317.2 873.5,308.4 883.5,297.5 893.5,290.0 903.5,287.8 913.5,293.0 923.5,302.9 933.5,313.2 943.5,324.7 953.5,330.8 963.5,333.5 973.5,333.5 983.5,331.1 993.5,328.3 1003.5,322.9 1013.5,311.7 1023.5,295.5 1033.5,281.8 1043.5,273.5 1053.5,265.9 1063.5,254.9 1073.5,243.9 1083.5,236.0 1093.5,230.2 1103.5,223.5 1113.5,215.5 1123.5,207.9 1133.5,199.7 1143.5,196.6 1153.5,207.7 1163.5,219.1 1173.5,219.3 1183.5,213.6 1193.5,204.9 1203.5,199.3 1213.5,196.6 1223.5,199.9 1233.5,199.9 1243.5,194.1 1253.5,191.1 1263.5,188.3 1273.5,195.3 1283.5,203.2 1293.5,214.6 1303.5,232.5 1313.5,246.9 1323.5,257.1 1333.5,263.0 1343.5,274.2 1353.5,287.4 1363.5,290.0 1373.5,284.9 1383.5,281.8 1393.5,281.5 1403.5,278.8 1413.5,276.9 1423.5,278.5 1433.5,280.7 1443.5,286.1 1453.5,296.2 1463.5,310.8 1473.5,333.3" fill="none" stroke="#800080" stroke-width="1"/>
<polyline points="23.5,286.7 33.5,265.9 43.5,249.4 53.5,233.0 63.5,238.5 73.5,238.5 83.5,249.4 93.5,260.4 103.5,274.6 113.5,286.7 123.5,286.7 133.5,281.2 143.5,273.0 153.5,263.7 163.5,253.8 173.5,238.5 183.5,216.5 193.5,194.4 203.5,183.7 213.5,173.0 223.5,155.6 233.5,139.6 243.5,134.2 253.5,128.2 263.5,128.2 273.5,128.2 283.5,122.2 293.5,122.2 303.5,122.7 313.5,128.9 323.5,128.9 333.5,128.9 343.5,138.2 353.5,150.8 363.5,150.8 373.5,155.6 383.5,155.6 393.5,155.6 403.5,150.8 413.5,150.5 423.5,150.5 433.5,150.8 443.5,155.6 453.5,155.6 463.5,160.9 473.5,166.1 483.5,166.7 493.5,172.2 503.5,172.2 513.5,177.1 523.5,177.1 533.5,177.1 543.5,182.9 553.5,182.9 563.5,188.2 573.5,188.2 583.5,193.5 593.5,188.9 603.5,196.3 613.5,200.3 623.5,205.6 633.5,216.3 643.5,220.9 653.5,220.9 663.5,231.9 673.5,238.5 683.5,248.9 693.5,249.4 703.5,254.4 713.5,253.8 723.5,259.3 733.5,271.3 743.5,276.8 753.5,276.8 763.5,291.6 773.5,302.0 783.5,309.2 793.5,309.2 803.5,314.1 813.5,314.1 823.5,314.6 833.5,325.0 843.5,325.0 853.5,320.2 863.5,314.1 873.5,302.8 883.5,292.2 893.5,287.8 903.5,287.8 913.5,298.2 923.5,307.5 933.5,318.9 943.5,330.5 953.5,331.1 963.5,336.0 973.5,331.1 983.5,331.1 993.5,325.6 1003.5,320.2 1013.5,303.1 1023.5,287.8 1033.5,275.7 1043.5,271.3 1053.5,260.4 1063.5,249.4 1073.5,238.5 1083.5,233.5 1093.5,226.8 1103.5,220.2 1113.5,210.8 1123.5,205.0 1133.5,194.4 1143.5,198.8 1153.5,216.5 1163.5,221.6 1173.5,217.0 1183.5,210.2 1193.5,199.6 1203.5,199.0 1213.5,194.3 1223.5,205.6 1233.5,194.3 1243.5,193.9 1253.5,188.3 1263.5,188.3 1273.5,202.3 1283.5,204.2 1293.5,225.0 1303.5,240.0 1313.5,253.8 1323.5,260.4 1333.5,265.6 1343.5,282.8 1353.5,291.9 1363.5,288.1 1373.5,281.8 1383.5,281.8 1393.5,281.2 1403.5,276.4 1413.5,277.5 1423.5,279.6 1433.5,281.8 1443.5,290.4 1453.5,302.0 1463.5,319.6 1473.5,347.0" fill="none" stroke="#000" stroke-width="2.2" stroke-linejoin="round"/>
<g font-family="'Liberation Serif', serif" font-style="italic" font-weight="normal" font-size="23"><g fill="#fff" stroke="#fff" stroke-width="3.2" stroke-linejoin="round" style="filter:drop-shadow(2px 3px 2px rgba(0,0,0,0.45))"><text transform="translate(897,446) rotate(-12)" textLength="392" lengthAdjust="spacing">www.trading-software-collection.com</text><text transform="translate(880,481) rotate(-11.7)" textLength="445" lengthAdjust="spacing">andreybbrv@gmail.com, Skype: andreybbrv</text></g><g fill="#e8001c" stroke="#e8001c" stroke-width="0.55"><text transform="translate(897,446) rotate(-12)" textLength="392" lengthAdjust="spacing">www.trading-software-collection.com</text><text transform="translate(880,481) rotate(-11.7)" textLength="445" lengthAdjust="spacing">andreybbrv@gmail.com, Skype: andreybbrv</text></g></g>
<path d="M10 631H1484" stroke="#000" stroke-width="2"/>
<path d="M10 707H1490" stroke="#000" stroke-width="2"/>
<polyline points="23.5,665 33.5,659.4 43.5,688.6 53.5,724.3 63.5,737 73.5,748.6 83.5,735" fill="none" stroke="#ff4500" stroke-width="2.2"/>
<polyline points="653.5,703.9 663.5,716 673.5,708 683.5,709.4 693.5,713.4 703.5,698.7 713.5,692.8 723.5,717.4 733.5,734.7 743.5,720 753.5,704 763.5,724 773.5,744 783.5,717.4 793.5,692.8 803.5,701.4 813.5,717.4 823.5,724 833.5,718.7 843.5,704 853.5,685.4 863.5,694.7 873.5,688 883.5,679.5 893.5,704 903.5,725.4 913.5,744 923.5,746.7 933.5,728 943.5,722.7 953.5,697.4 963.5,683.2 973.5,697.4 983.5,712 993.5,702.7 1003.5,677.4 1013.5,674 1023.5,688 1033.5,692 1043.5,698.5 1053.5,695.5 1063.5,683.3 1073.5,677.4 1083.5,692.6 1093.5,707.2 1103.5,701.4 1113.5,697 1123.5,692 1133.5,679.5 1143.5,710 1153.5,762.7 1163.5,723.3 1173.5,664.8 1183.5,662 1193.5,682.4 1203.5,719.5 1213.5,730.6 1223.5,738 1233.5,713 1243.5,686.8 1253.5,698.5 1263.5,714.5 1273.5,730.6 1283.5,718.3 1293.5,723.3 1303.5,736.4 1313.5,711.6 1323.5,686.8 1333.5,686.2 1343.5,713 1353.5,722.4 1363.5,689.7 1373.5,682.4 1383.5,704.9 1393.5,707.8 1403.5,709.6 1413.5,713 1423.5,727.7 1433.5,726.2 1443.5,718.3 1453.5,743.7 1463.5,756.9 1473.5,752.5 1483.5,704.9" fill="none" stroke="#ff4500" stroke-width="2.2"/>
<polyline points="23.5,665.7 33.5,657 43.5,722 53.5,728.6 63.5,746 73.5,749.4 83.5,731" fill="none" stroke="#0000ff" stroke-width="2.2"/>
<polyline points="653.5,710.1 663.5,722.7 673.5,691.5 683.5,726 693.5,702 703.5,696 713.5,689.4 723.5,738 733.5,732 743.5,698 753.5,698 763.5,746.7 773.5,741 783.5,689.4 793.5,695 803.5,708 813.5,725.4 823.5,722.7 833.5,716.8 843.5,689.4 853.5,680.6 863.5,708.8 873.5,668 883.5,689.4 893.5,722 903.5,733.4 913.5,752.6 923.5,740 933.5,716.8 943.5,732 953.5,664.5 963.5,701.4 973.5,696 983.5,730 993.5,677.4 1003.5,677.4 1013.5,672 1023.5,705 1033.5,677.4 1043.5,710 1053.5,686.2 1063.5,680.3 1073.5,674.5 1083.5,707.2 1093.5,707.2 1103.5,698.5 1113.5,695.5 1123.5,686.8 1133.5,670.7 1143.5,748.7 1153.5,779.7 1163.5,665.7 1173.5,662.8 1183.5,660.5 1193.5,704.3 1203.5,734.1 1213.5,728.3 1223.5,750.5 1233.5,680.3 1243.5,692.6 1253.5,704.9 1263.5,724.8 1273.5,737 1283.5,697 1293.5,750.5 1303.5,727.7 1313.5,702.8 1323.5,674.5 1333.5,698.5 1343.5,728.3 1353.5,716.6 1363.5,660.5 1373.5,701.4 1383.5,707.2 1393.5,707.8 1403.5,713 1413.5,710.7 1423.5,747.5 1433.5,706.6 1443.5,727.7 1453.5,758.4 1463.5,758.4 1473.5,749.6 1483.5,661" fill="none" stroke="#0000ff" stroke-width="2.2"/>
<path d="M10 837.5H1490M10 854.5H1490M10 871.5H1490M10 889.5H1490" stroke="#808080" fill="none"/>
<path d="M10 828H1490" stroke="#008000" stroke-width="2"/>
<path d="M10 845H1490M10 880H1490" stroke="#0000ff" stroke-width="2"/>
<path d="M10 898H1490" stroke="#ff0000" stroke-width="2"/>
<path d="M10 863H1490" stroke="#000" stroke-width="2"/>
<path d="M23.5 831.4V863 M33.5 804V863 M43.5 863V865.7 M53.5 863V891 M63.5 863V924 M73.5 863V917 M663.5 863V915 M673.5 838.4V863 M683.5 863V898 M693.5 863V863 M703.5 835V863 M713.5 817V863 M723.5 863V898 M733.5 863V915 M743.5 849V863 M753.5 842V863 M763.5 863V908 M773.5 863V915 M783.5 849V863 M793.5 814V863 M803.5 804V863 M813.5 863V876.5 M823.5 863V921.6 M833.5 863V917.6 M843.5 856V863 M853.5 811V863 M863.5 835V863 M873.5 817V863 M883.5 838V863 M893.5 863V886 M903.5 863V921.6 M913.5 863V915 M923.5 863V917.6 M933.5 863V870 M943.5 863V898 M953.5 838V863 M963.5 838V863 M973.5 817V863 M983.5 863V891 M993.5 835V863 M1003.5 811V863 M1013.5 811V863 M1023.5 863V865.6 M1033.5 842V863 M1043.5 863V869.8 M1053.5 835V863 M1063.5 817V863 M1073.5 814V863 M1083.5 863V865.5 M1093.5 828V863 M1103.5 807V863 M1113.5 814V863 M1123.5 817V863 M1133.5 817V863 M1143.5 863V900 M1153.5 863V911.5 M1163.5 852.5V863 M1173.5 807V863 M1183.5 807V863 M1193.5 842V863 M1203.5 863V886.7 M1213.5 863V921.5 M1223.5 863V917 M1233.5 838V863 M1243.5 807V863 M1253.5 845.5V863 M1263.5 863V907.5 M1273.5 863V921.5 M1283.5 863V869.8 M1293.5 863V904 M1303.5 863V897.5 M1313.5 863V865.5 M1323.5 828V863 M1333.5 855.7V863 M1343.5 863V917 M1353.5 863V890 M1363.5 821V863 M1373.5 838V863 M1383.5 863V883.7 M1393.5 855.7V863 M1403.5 863V869.8 M1413.5 863V897.5 M1423.5 863V900.5 M1433.5 863V865.5 M1443.5 863V886.7 M1453.5 863V907.5 M1463.5 863V917 M1473.5 863V917 M1483.5 845V863" stroke="#0000ff" stroke-width="3" fill="none"/>
<path d="M10 1008.5H1490" stroke="#000" stroke-width="1.5"/>
<polyline points="23.5,949.5 33.5,957 43.5,981.4 53.5,981.4 63.5,1016.2 73.5,1035.3 83.5,1042.9 93.5,1051.5 103.5,1040 113.5,1029" fill="none" stroke="#ffa500" stroke-width="2.2"/>
<polyline points="653.5,1020.5 663.5,1020.4 673.5,1008.4 683.5,1015.8 693.5,1020.4 703.5,1016.4 713.5,1004.9 723.5,1027 733.5,1020.4 743.5,1016.4 753.5,1016.4 763.5,1039 773.5,1031.6 783.5,1016.4 793.5,1020.4 803.5,1016.4 813.5,1000.4 823.5,997 833.5,1012.4 843.5,1012.4 853.5,1009.7 863.5,1004.9 873.5,981.7 883.5,977.7 893.5,991 903.5,1007 913.5,1023 923.5,1051 933.5,1047 943.5,1043 953.5,1012.4 963.5,999 973.5,984.4 983.5,1000.4 993.5,977.2 1003.5,995.9 1013.5,981.8 1023.5,992.3 1033.5,973.8 1043.5,996.2 1053.5,988.7 1063.5,996 1073.5,989 1083.5,1004.2 1093.5,992.2 1103.5,996 1113.5,996 1123.5,996 1133.5,984.2 1143.5,1016 1153.5,1047.8 1163.5,1027.8 1173.5,1020.8 1183.5,1004.2 1193.5,982 1203.5,965.2 1213.5,992.2 1223.5,1020.1 1233.5,1020.1 1243.5,1011.9 1253.5,1004.9 1263.5,1011.9 1273.5,1008.7 1283.5,1024 1293.5,1051 1303.5,1055 1313.5,1043.6 1323.5,1020.8 1333.5,1027 1343.5,1017 1353.5,1011.9 1363.5,992.8 1373.5,1008 1383.5,1004.2 1393.5,992.2 1403.5,992.2 1413.5,1011.9 1423.5,1023.3 1433.5,1017 1443.5,1023.3 1453.5,1039.8 1463.5,1055.7 1473.5,1055.7 1483.5,1039.8" fill="none" stroke="#ffa500" stroke-width="2.2"/>
<polyline points="363.5,1014 373.5,1036.5 383.5,1014" fill="none" stroke="#ffa500" stroke-width="2.2"/>
<path d="M8 497.5H1566M8 644.5H1566M8 791.5H1566M8 938.5H1566" stroke="#000" stroke-width="1" fill="none"/>
<path d="M9 1062.5H1490M1490.5 64V1062" stroke="#000" fill="none"/>
<path d="M1490 62.5H1497 M1490 84.5H1497 M1490 106.5H1497 M1490 128.5H1497 M1490 150.5H1497 M1490 172.5H1497 M1490 194.5H1497 M1490 216.5H1497 M1490 237.5H1497 M1490 259.5H1497 M1490 281.5H1497 M1490 303.5H1497 M1490 325.5H1497 M1490 347.5H1497 M1490 369.5H1497 M1490 391.5H1497 M1490 413.5H1497 M1490 435.5H1497 M1490 457.5H1497 M1490 479.5H1497 M1490 684.5H1497 M1490 731.5H1497 M1490 755.5H1497 M1490 779.5H1497 M1490 828.5H1497 M1490 863.5H1497 M1490 898.5H1497 M1490 932.5H1497 M1490 970.5H1497 M1490 1008.5H1497 M1490 1047.5H1497 M23.5 1062V1069 M83.5 1062V1069 M143.5 1062V1069 M203.5 1062V1069 M263.5 1062V1069 M323.5 1062V1069 M383.5 1062V1069 M443.5 1062V1069 M503.5 1062V1069 M563.5 1062V1069 M623.5 1062V1069 M683.5 1062V1069 M743.5 1062V1069 M803.5 1062V1069 M863.5 1062V1069 M923.5 1062V1069 M983.5 1062V1069 M1043.5 1062V1069 M1103.5 1062V1069 M1163.5 1062V1069 M1223.5 1062V1069 M1283.5 1062V1069 M1343.5 1062V1069 M1403.5 1062V1069 M1463.5 1062V1069" stroke="#000" fill="none"/>
<g font-family="'Liberation Sans', sans-serif"><text x="1498" y="66.5" font-size="11" fill="#000" text-anchor="start" font-weight="normal">60,04</text><text x="1498" y="88.5" font-size="11" fill="#000" text-anchor="start" font-weight="normal">60,02</text><text x="1498" y="110.5" font-size="11" fill="#000" text-anchor="start" font-weight="normal">60,00</text><text x="1498" y="132.5" font-size="11" fill="#000" text-anchor="start" font-weight="normal">59,98</text><text x="1498" y="154.5" font-size="11" fill="#000" text-anchor="start" font-weight="normal">59,96</text><text x="1498" y="176.5" font-size="11" fill="#000" text-anchor="start" font-weight="normal">59,94</text><text x="1498" y="198.5" font-size="11" fill="#000" text-anchor="start" font-weight="normal">59,92</text><text x="1498" y="220.5" font-size="11" fill="#000" text-anchor="start" font-weight="normal">59,90</text><text x="1498" y="241.5" font-size="11" fill="#000" text-anchor="start" font-weight="normal">59,88</text><text x="1498" y="263.5" font-size="11" fill="#000" text-anchor="start" font-weight="normal">59,86</text><text x="1498" y="285.5" font-size="11" fill="#000" text-anchor="start" font-weight="normal">59,84</text><text x="1498" y="307.5" font-size="11" fill="#000" text-anchor="start" font-weight="normal">59,82</text><text x="1498" y="329.5" font-size="11" fill="#000" text-anchor="start" font-weight="normal">59,80</text><text x="1498" y="351.5" font-size="11" fill="#000" text-anchor="start" font-weight="normal">59,78</text><text x="1498" y="373.5" font-size="11" fill="#000" text-anchor="start" font-weight="normal">59,76</text><text x="1498" y="395.5" font-size="11" fill="#000" text-anchor="start" font-weight="normal">59,74</text><text x="1498" y="417.5" font-size="11" fill="#000" text-anchor="start" font-weight="normal">59,72</text><text x="1498" y="439.5" font-size="11" fill="#000" text-anchor="start" font-weight="normal">59,70</text><text x="1498" y="461.5" font-size="11" fill="#000" text-anchor="start" font-weight="normal">59,68</text><text x="1498" y="483.5" font-size="11" fill="#000" text-anchor="start" font-weight="normal">59,66</text><text x="1498" y="688.5" font-size="11" fill="#000" text-anchor="start" font-weight="normal">2</text><text x="1498" y="735.5" font-size="11" fill="#000" text-anchor="start" font-weight="normal">-2</text><text x="1498" y="759.5" font-size="11" fill="#000" text-anchor="start" font-weight="normal">-4</text><text x="1498" y="783.5" font-size="11" fill="#000" text-anchor="start" font-weight="normal">-6</text><text x="1498" y="832.5" font-size="11" fill="#000" text-anchor="start" font-weight="normal">100</text><text x="1498" y="867.5" font-size="11" fill="#000" text-anchor="start" font-weight="normal">0</text><text x="1498" y="902.5" font-size="11" fill="#000" text-anchor="start" font-weight="normal">-100</text><text x="1498" y="936.5" font-size="11" fill="#000" text-anchor="start" font-weight="normal">-200</text><text x="1498" y="974.5" font-size="11" fill="#000" text-anchor="start" font-weight="normal">2</text><text x="1498" y="1012.5" font-size="11" fill="#000" text-anchor="start" font-weight="normal">0</text><text x="1498" y="1051.5" font-size="11" fill="#000" text-anchor="start" font-weight="normal">-2</text><text x="22.8" y="1079" font-size="11" fill="#000" text-anchor="middle" font-weight="normal">21:25</text><text x="82.8" y="1079" font-size="11" fill="#000" text-anchor="middle" font-weight="normal">21:26</text><text x="142.8" y="1079" font-size="11" fill="#000" text-anchor="middle" font-weight="normal">21:27</text><text x="202.8" y="1079" font-size="11" fill="#000" text-anchor="middle" font-weight="normal">21:27</text><text x="262.8" y="1079" font-size="11" fill="#000" text-anchor="middle" font-weight="normal">21:28</text><text x="322.8" y="1079" font-size="11" fill="#000" text-anchor="middle" font-weight="normal">21:28</text><text x="382.8" y="1079" font-size="11" fill="#000" text-anchor="middle" font-weight="normal">21:28</text><text x="442.8" y="1079" font-size="11" fill="#000" text-anchor="middle" font-weight="normal">21:28</text><text x="502.8" y="1079" font-size="11" fill="#000" text-anchor="middle" font-weight="normal">21:28</text><text x="562.8" y="1079" font-size="11" fill="#000" text-anchor="middle" font-weight="normal">21:28</text><text x="622.8" y="1079" font-size="11" fill="#000" text-anchor="middle" font-weight="normal">21:28</text><text x="682.8" y="1079" font-size="11" fill="#000" text-anchor="middle" font-weight="normal">21:29</text><text x="742.8" y="1079" font-size="11" fill="#000" text-anchor="middle" font-weight="normal">21:29</text><text x="802.8" y="1079" font-size="11" fill="#000" text-anchor="middle" font-weight="normal">21:30</text><text x="862.8" y="1079" font-size="11" fill="#000" text-anchor="middle" font-weight="normal">21:31</text><text x="922.8" y="1079" font-size="11" fill="#000" text-anchor="middle" font-weight="normal">21:34</text><text x="982.8" y="1079" font-size="11" fill="#000" text-anchor="middle" font-weight="normal">21:39</text><text x="1042.8" y="1079" font-size="11" fill="#000" text-anchor="middle" font-weight="normal">21:46</text><text x="1102.8" y="1079" font-size="11" fill="#000" text-anchor="middle" font-weight="normal">21:56</text><text x="1162.8" y="1079" font-size="11" fill="#000" text-anchor="middle" font-weight="normal">21:59</text><text x="1222.8" y="1079" font-size="11" fill="#000" text-anchor="middle" font-weight="normal">22:08</text><text x="1282.8" y="1079" font-size="11" fill="#000" text-anchor="middle" font-weight="normal">22:21</text><text x="1342.8" y="1079" font-size="11" fill="#000" text-anchor="middle" font-weight="normal">22:33</text><text x="1402.8" y="1079" font-size="11" fill="#000" text-anchor="middle" font-weight="normal">22:55</text><text x="1462.8" y="1079" font-size="11" fill="#000" text-anchor="middle" font-weight="normal">23:29</text></g>
<g font-family="'Liberation Sans', sans-serif"><path d="M1491.5 238.5L1498.5 231.5H1528.5V244.5H1498.5Z" fill="#ffa07a" stroke="#000" stroke-width="1"/><text x="1499" y="242.5" font-size="11" fill="#000" text-anchor="start" font-weight="normal">59,88</text><path d="M1491.5 294.5L1498.5 287.5H1528.5V300.5H1498.5Z" fill="#ff4500" stroke="#000" stroke-width="1"/><text x="1499" y="298.5" font-size="11" fill="#fff" text-anchor="start" font-weight="normal">59,83</text><path d="M1491.5 337.5L1498.5 330.5H1528.5V343.5H1498.5Z" fill="#800080" stroke="#000" stroke-width="1"/><text x="1499" y="341.5" font-size="11" fill="#fff" text-anchor="start" font-weight="normal">59,79</text><path d="M1491.5 348.5L1498.5 341.5H1528.5V354.5H1498.5Z" fill="#000" stroke="#000" stroke-width="1"/><text x="1499" y="352.5" font-size="11" fill="#fff" text-anchor="start" font-weight="normal">59,78</text><path d="M1491.5 380.5L1498.5 373.5H1528.5V386.5H1498.5Z" fill="#000" stroke="#000" stroke-width="1"/><text x="1499" y="384.5" font-size="11" fill="#fff" text-anchor="start" font-weight="normal">59,75</text><path d="M1491.5 631.5L1498.5 624.5H1506.5V637.5H1498.5Z" fill="#000" stroke="#000" stroke-width="1"/><text x="1499" y="635.5" font-size="11" fill="#fff" text-anchor="start" font-weight="normal">0</text><path d="M1491.5 660.5L1498.5 653.5H1506.5V666.5H1498.5Z" fill="#0000ff" stroke="#000" stroke-width="1"/><text x="1499" y="664.5" font-size="11" fill="#fff" text-anchor="start" font-weight="normal">4</text><path d="M1491.5 704.5L1498.5 697.5H1520.5V710.5H1498.5Z" fill="#ff4500" stroke="#000" stroke-width="1"/><text x="1499" y="708.5" font-size="11" fill="#fff" text-anchor="start" font-weight="normal">0,25</text><path d="M1491.5 845.5L1498.5 838.5H1511.5V851.5H1498.5Z" fill="#0000ff" stroke="#000" stroke-width="1"/><text x="1499" y="849.5" font-size="11" fill="#fff" text-anchor="start" font-weight="normal">50</text><path d="M1491.5 1039.5L1498.5 1032.5H1518.5V1045.5H1498.5Z" fill="#ffa500" stroke="#000" stroke-width="1"/><text x="1499" y="1043.5" font-size="11" fill="#000" text-anchor="start" font-weight="normal">-1,6</text></g>
<g font-family="'Liberation Sans', sans-serif"><text x="11" y="72" font-size="11" fill="#000" text-anchor="start" font-weight="normal">MT Dynamic Trend, MT UMA</text><text x="11" y="519" font-size="11" fill="#000" text-anchor="start" font-weight="normal">MT Tick Delta Analyis</text><text x="11" y="665" font-size="11" fill="#000" text-anchor="start" font-weight="normal">MT Trend Bias</text><text x="11" y="813" font-size="11" fill="#000" text-anchor="start" font-weight="normal">MT Trend Bias Power</text><text x="11" y="959" font-size="11" fill="#000" text-anchor="start" font-weight="normal">MT Trend Slope Analysis</text><text x="11" y="1059" font-size="11" fill="#000" text-anchor="start" font-weight="normal">© 2015 NinjaTrader, LLC</text></g>
<rect x="8" y="1089" width="1558" height="24" fill="#f0f0f0"/>
<rect x="1481" y="1091" width="68" height="19" fill="#cdcdcd"/>
<path d="M19 1096L15 1100L19 1104M1556 1096L1560 1100L1556 1104" stroke="#606060" stroke-width="1.6" fill="none"/>
<path d="M7.5 56V1113.5H1566.5V56" stroke="#d6d6d6" fill="none"/>
<text style="white-space:pre" font-family="'Liberation Sans', sans-serif" x="787" y="21" font-size="14" fill="#1e1e1e" text-anchor="middle" font-weight="normal">CL 07-15 (150 Tick)  17.06.2015</text>
<rect x="11.5" y="8.5" width="13" height="13" fill="#f4f8fc" stroke="#6b87b0"/>
<path d="M12 13.5H24M12 17.5H24M16.5 9V21M20.5 9V21" stroke="#c5d3e6" stroke-width="0.8"/>
<polyline points="12,19 15,14 18,16 24,10" fill="none" stroke="#1d9a2a" stroke-width="1.6"/>
<polyline points="12,17 16,16 19,13 24,15" fill="none" stroke="#2a56c6" stroke-width="1.4"/>
<rect x="1426" y="2" width="32" height="18" fill="#efefef" stroke="#3c94f0" stroke-width="2"/>
<text x="1443" y="15" font-size="11" text-anchor="middle" fill="#111" font-family="'Liberation Sans', sans-serif">L</text>
<rect x="1478" y="12" width="9" height="3" fill="#111"/>
<rect x="1504.5" y="7.5" width="10" height="8" fill="none" stroke="#111"/><rect x="1504" y="7" width="11" height="2.5" fill="#111"/>
<rect x="1522" y="1" width="45" height="20" fill="#bbbbbb"/>
<path d="M1541 7L1549 15M1549 7L1541 15" stroke="#fff" stroke-width="1.6"/>
<path d="M10 30.5H1564" stroke="#dedede"/>
<rect x="11" y="35.5" width="2" height="2" fill="#a4a4a4"/>
<rect x="11" y="39.5" width="2" height="2" fill="#a4a4a4"/>
<rect x="11" y="43.5" width="2" height="2" fill="#a4a4a4"/>
<rect x="11" y="47.5" width="2" height="2" fill="#a4a4a4"/>
<path d="M20.5 36V50M155.5 36V50M265.5 36V50M323.5 36V50" stroke="#b8b8b8"/>
<text x="28" y="47" font-size="11.4" fill="#111" font-family="'Liberation Sans', sans-serif">CL 07-15</text>
<text x="94" y="47" font-size="11.4" fill="#111" font-family="'Liberation Sans', sans-serif">150 Tick</text>
<path d="M79.5 42H85.5L82.5 45.5Z" fill="#111"/>
<path d="M142 42H148L145 45.5Z" fill="#111"/>
<path d="M177.5 42H183.5L180.5 45.5Z" fill="#111"/>
<path d="M206.5 42H212.5L209.5 45.5Z" fill="#111"/>
<path d="M287 42H293L290 45.5Z" fill="#111"/>
<rect x="161.5" y="37.5" width="3" height="12" rx="1.2" fill="#39c23a" stroke="#222" stroke-width="0.9"/>
<rect x="166.5" y="36.5" width="3" height="12" rx="1.2" fill="#39c23a" stroke="#222" stroke-width="0.9"/>
<rect x="171.5" y="37.5" width="3" height="12" rx="1.2" fill="#e03a3a" stroke="#222" stroke-width="0.9"/>
<path d="M191 49L193 44L202 36L205 39L196 47Z" fill="#f2d23a" stroke="#8a7020" stroke-width="0.8"/>
<path d="M202 36L204 34.5L206.5 37L205 39Z" fill="#e04848"/>
<circle cx="226" cy="44" r="4.5" fill="#bcd6ee" stroke="#6f8aa6" stroke-width="1.5"/><path d="M222.5 47.5L219 51" stroke="#333" stroke-width="2"/>
<path d="M231 37.5H236M233.5 35V40" stroke="#1a9a1a" stroke-width="2"/>
<circle cx="249" cy="44" r="4.5" fill="#d6d6d6" stroke="#bdbdbd" stroke-width="1.5"/><path d="M245.5 47.5L242 51" stroke="#bdbdbd" stroke-width="2"/><path d="M253 37.5H258" stroke="#bdbdbd" stroke-width="1.5"/>
<path d="M272 36L272 47L275 44.5L278 50L280 49L277 43.5L281 43Z" fill="#fff" stroke="#333" stroke-width="0.9"/>
<rect x="300.5" y="35.5" width="14" height="15" fill="#fff" stroke="#555"/><circle cx="308" cy="43" r="3.5" fill="#bcd6ee" stroke="#6f8aa6" stroke-width="1.2"/><path d="M305 46L301 50" stroke="#333" stroke-width="1.6"/>
<path d="M329 36.5H334L336 38H329ZM329 44.5H334L336 46H329Z" fill="#e03a3a"/><rect x="329" y="36" width="6" height="2.5" fill="#3cba3c"/><rect x="338" y="38" width="2" height="13" fill="#3cba3c"/><rect x="342" y="46" width="2" height="5" fill="#e03a3a"/>
<path d="M336 40H345M336 43H345M336 49H345" stroke="#9a9a9a" stroke-width="0.7"/>
<rect x="352.5" y="35.5" width="15" height="15" fill="#fff" stroke="#444"/><rect x="355" y="39" width="2.5" height="8" fill="#3cba3c"/><rect x="359" y="37" width="2.5" height="7" fill="#3cba3c"/><rect x="363" y="40" width="2.5" height="8" fill="#e03a3a"/>
<rect x="375.5" y="35.5" width="15" height="15" fill="#ececec" stroke="#555"/><polyline points="377,44 380,40 383,42 386,38 389,41" fill="none" stroke="#2aa02a" stroke-width="0.9"/><polyline points="377,47 380,45 383,46 386,44 389,46" fill="none" stroke="#d04040" stroke-width="0.9"/>
<path d="M400.5 35.5H408L411.5 39V50.5H400.5Z" fill="#fff" stroke="#777"/>
<text x="406" y="48" font-size="11" font-weight="bold" text-anchor="middle" fill="#1a8a2a" font-family="'Liberation Sans', sans-serif">$</text>
<rect x="422.5" y="35.5" width="13" height="15" fill="#fff" stroke="#6a7a9a"/><rect x="424" y="37.5" width="10" height="2.5" fill="#5a8ad0"/><rect x="424" y="41.5" width="2" height="7.5" fill="#9a5ad0"/><path d="M428 43H434M428 45.5H434M428 48H434" stroke="#b0b8c8" stroke-width="0.8"/>
</svg>


<div class="abs" style="left:77px;top:504px;width:578px;height:525px;background:#efc76b;box-sizing:border-box;border:1px solid #d6ab55;"></div>
<div class="abs" style="left:333px;top:510px;white-space:pre;font-size:15px;color:#2b2b2b;">Indicators</div>
<div class="abs" style="left:627px;top:510px;width:19px;height:19px;background:#c75050;"></div>
<svg class="abs" style="left:627px;top:510px" width="19" height="19"><path d="M6.5 6.5L12.5 12.5M12.5 6.5L6.5 12.5" stroke="#fff" stroke-width="1.7"/></svg>
<div class="abs" style="left:84px;top:534px;width:563px;height:488px;background:#f0f0f0;"></div>
<div class="abs" style="left:85px;top:535px;width:561px;height:2px;background:#6f7076;"></div>
<div class="abs" style="left:358px;top:537px;width:8px;height:419px;background:#f0f0f0;"></div>
<div class="abs" style="left:87px;top:537px;width:270px;height:237px;background:#ffffff;"></div>
<div class="abs" style="left:85px;top:535px;width:1px;height:421px;background:#a8a8a8;"></div>
<div class="abs" style="left:86px;top:537px;width:2px;height:419px;background:#6d6e73;"></div>
<div class="abs" style="left:357px;top:537px;width:1px;height:238px;background:#6f7380;"></div>
<div class="abs" style="left:86px;top:774px;width:272px;height:1px;background:#7a7f87;"></div>
<div class="abs" style="left:340px;top:538px;width:16px;height:236px;background:#f0f0f0;"></div>
<div class="abs" style="left:340px;top:679px;width:15px;height:17px;background:#cdcdcd;"></div>
<svg class="abs" style="left:340px;top:538px" width="16" height="236"><path d="M3.5 12.5L7.5 8.5L11.5 12.5" stroke="#606060" stroke-width="2" fill="none"/><path d="M3.5 223.5L7.5 227.5L11.5 223.5" stroke="#606060" stroke-width="2" fill="none"/></svg>
<div class="abs" style="left:91px;top:540px;white-space:pre;font-size:12px;line-height:13px;color:#000;transform:scaleX(0.882);transform-origin:0 0;">MT T&amp;S Order Flow Analysis
MT T&amp;S Order Flow Analyzer GUI
MT T&amp;S Order Flow Momentum
MT T&amp;S Order Flow Speed Of Tape
MT Tick Delta Analyis
MT Trend Bias
MT Trend Bias Power
MT Trend Dynamic Trend
MT Trend Slope
MT UMA
MT Volume Current Bid Ask
MT Volume Delta Analyis
MT Volume Grid HTF
MT Volume Increase
MT Volume Momentum
MT Volume PCI
MT Volume Power
MT Volume Price Bias</div>
<div class="abs" style="left:88px;top:780px;width:269px;height:132px;background:#fff;"></div>
<div class="abs" style="left:86px;top:779px;width:272px;height:1px;background:#7a7f87;"></div>
<div class="abs" style="left:357px;top:779px;width:1px;height:134px;background:#828282;"></div>
<div class="abs" style="left:86px;top:912px;width:272px;height:1px;background:#828282;"></div>
<div class="abs" style="left:89px;top:846px;width:267px;height:13px;background:#3399ff;"></div>
<div class="abs" style="left:91px;top:782px;white-space:pre;font-size:12px;line-height:13px;color:#000;transform:scaleX(0.882);transform-origin:0 0;">MT Tick Delta Analyis
MT Trend Bias
MT Trend Bias Power
MT Dynamic Trend
MT Trend Slope Analysis</div>
<div class="abs" style="left:91px;top:847px;white-space:pre;font-size:12px;line-height:13px;color:#000;transform:scaleX(0.882);transform-origin:0 0;color:#fff;">MT UMA</div>
<div class="abs" style="left:112px;top:925px;width:66px;height:23px;box-sizing:border-box;border:1px solid #bfbfbf;background:#f0f0f0;"></div>
<div class="abs" style="left:112px;top:925px;width:66px;height:23px;line-height:23px;text-align:center;font-size:12px;color:#a0a0a0">New</div>
<div class="abs" style="left:265px;top:925px;width:66px;height:23px;box-sizing:border-box;border:1px solid #adadad;background:linear-gradient(#f2f2f2,#e0e0e0);"></div><div class="abs" style="left:265px;top:925px;width:66px;height:23px;line-height:23px;text-align:center;font-size:12px;color:#000">Remove</div>
<div class="abs" style="left:174px;top:986px;width:79px;height:23px;box-sizing:border-box;border:1px solid #adadad;background:linear-gradient(#f2f2f2,#e0e0e0);"></div><div class="abs" style="left:174px;top:986px;width:79px;height:23px;line-height:23px;text-align:center;font-size:12px;color:#000">OK</div>
<div class="abs" style="left:327px;top:986px;width:78px;height:23px;box-sizing:border-box;border:1px solid #adadad;background:linear-gradient(#f2f2f2,#e0e0e0);border:1px solid #3399ff;"></div><div class="abs" style="left:327px;top:986px;width:78px;height:23px;line-height:23px;text-align:center;font-size:12px;color:#000">Apply</div>
<div class="abs" style="left:480px;top:986px;width:78px;height:23px;box-sizing:border-box;border:1px solid #adadad;background:linear-gradient(#f2f2f2,#e0e0e0);"></div><div class="abs" style="left:480px;top:986px;width:78px;height:23px;line-height:23px;text-align:center;font-size:12px;color:#000">Close</div>
<div class="abs" style="left:85px;top:955px;width:562px;height:1px;background:#ffffff;"></div>
<div class="abs" style="left:366px;top:535px;width:280px;height:358px;background:#fff;box-sizing:border-box;border:1px solid #8a8a8a;border-top:2px solid #6f7076;"></div>
<div class="abs" style="left:367px;top:537px;width:278px;height:2px;background:#c8c8c8;"></div>
<div class="abs" style="left:367px;top:537px;width:14px;height:255px;background:#c8c8c8;"></div>
<div class="abs" style="left:367px;top:539px;width:278px;height:16px;background:#c8c8c8;"></div>
<svg class="abs" style="left:369px;top:542px" width="10" height="10"><rect x="0.5" y="0.5" width="8" height="8" fill="#f4f4f4" stroke="#000"/><path d="M2 4.5H7" stroke="#000"/></svg>
<div class="abs" style="left:384px;top:540px;white-space:pre;font-size:11.4px;color:#000;font-weight:bold;line-height:14px;">Parameters</div>
<div class="abs" style="left:381px;top:555px;width:116px;height:15px;background:#fff;"></div>
<div class="abs" style="left:381px;top:570px;width:264px;height:1px;background:#d4d4d4;"></div>
<div class="abs" style="left:497px;top:555px;width:1px;height:15px;background:#d0d0d0;"></div>
<div class="abs" style="left:384px;top:556px;white-space:pre;font-size:11.4px;color:#000;line-height:14px;width:112px;overflow:hidden;">Period</div>
<div class="abs" style="left:501px;top:556px;white-space:pre;font-size:11.8px;color:#000;font-weight:bold;line-height:14px;">14</div>
<div class="abs" style="left:367px;top:571px;width:278px;height:16px;background:#c8c8c8;"></div>
<svg class="abs" style="left:369px;top:574px" width="10" height="10"><rect x="0.5" y="0.5" width="8" height="8" fill="#f4f4f4" stroke="#000"/><path d="M2 4.5H7" stroke="#000"/></svg>
<div class="abs" style="left:384px;top:572px;white-space:pre;font-size:11.4px;color:#000;font-weight:bold;line-height:14px;">Data</div>
<div class="abs" style="left:381px;top:587px;width:116px;height:15px;background:#fff;"></div>
<div class="abs" style="left:381px;top:602px;width:264px;height:1px;background:#d4d4d4;"></div>
<div class="abs" style="left:497px;top:587px;width:1px;height:15px;background:#d0d0d0;"></div>
<div class="abs" style="left:384px;top:588px;white-space:pre;font-size:11.4px;color:#000;line-height:14px;width:112px;overflow:hidden;">Calculate on bar close</div>
<div class="abs" style="left:501px;top:588px;white-space:pre;font-size:11.8px;color:#000;font-weight:bold;line-height:14px;">True</div>
<div class="abs" style="left:381px;top:603px;width:116px;height:15px;background:#fff;"></div>
<div class="abs" style="left:381px;top:618px;width:264px;height:1px;background:#d4d4d4;"></div>
<div class="abs" style="left:497px;top:603px;width:1px;height:15px;background:#d0d0d0;"></div>
<div class="abs" style="left:384px;top:604px;white-space:pre;font-size:11.4px;color:#000;line-height:14px;width:112px;overflow:hidden;">Input series</div>
<div class="abs" style="left:501px;top:604px;white-space:pre;font-size:11.8px;color:#000;font-weight:bold;line-height:14px;">CL 07-15 (150 Tick)</div>
<div class="abs" style="left:381px;top:619px;width:116px;height:15px;background:#fff;"></div>
<div class="abs" style="left:381px;top:634px;width:264px;height:1px;background:#d4d4d4;"></div>
<div class="abs" style="left:497px;top:619px;width:1px;height:15px;background:#d0d0d0;"></div>
<div class="abs" style="left:384px;top:620px;white-space:pre;font-size:11.4px;color:#000;line-height:14px;width:112px;overflow:hidden;">Maximum bars look ba</div>
<div class="abs" style="left:501px;top:620px;white-space:pre;font-size:11.8px;color:#000;font-weight:bold;line-height:14px;">TwoHundredFiftySix</div>
<div class="abs" style="left:367px;top:635px;width:278px;height:16px;background:#c8c8c8;"></div>
<svg class="abs" style="left:369px;top:638px" width="10" height="10"><rect x="0.5" y="0.5" width="8" height="8" fill="#f4f4f4" stroke="#000"/><path d="M2 4.5H7" stroke="#000"/></svg>
<div class="abs" style="left:384px;top:636px;white-space:pre;font-size:11.4px;color:#000;font-weight:bold;line-height:14px;">Visual</div>
<div class="abs" style="left:381px;top:651px;width:116px;height:15px;background:#fff;"></div>
<div class="abs" style="left:381px;top:666px;width:264px;height:1px;background:#d4d4d4;"></div>
<div class="abs" style="left:497px;top:651px;width:1px;height:15px;background:#d0d0d0;"></div>
<div class="abs" style="left:384px;top:652px;white-space:pre;font-size:11.4px;color:#000;line-height:14px;width:112px;overflow:hidden;">Auto scale</div>
<div class="abs" style="left:501px;top:652px;white-space:pre;font-size:11.8px;color:#000;font-weight:bold;line-height:14px;">False</div>
<div class="abs" style="left:381px;top:667px;width:116px;height:15px;background:#fff;"></div>
<div class="abs" style="left:381px;top:682px;width:264px;height:1px;background:#d4d4d4;"></div>
<div class="abs" style="left:497px;top:667px;width:1px;height:15px;background:#d0d0d0;"></div>
<div class="abs" style="left:384px;top:668px;white-space:pre;font-size:11.4px;color:#000;line-height:14px;width:112px;overflow:hidden;">Displacement</div>
<div class="abs" style="left:501px;top:668px;white-space:pre;font-size:11.8px;color:#000;font-weight:bold;line-height:14px;">0</div>
<div class="abs" style="left:381px;top:683px;width:116px;height:15px;background:#fff;"></div>
<div class="abs" style="left:381px;top:698px;width:264px;height:1px;background:#d4d4d4;"></div>
<div class="abs" style="left:497px;top:683px;width:1px;height:15px;background:#d0d0d0;"></div>
<div class="abs" style="left:384px;top:684px;white-space:pre;font-size:11.4px;color:#000;line-height:14px;width:112px;overflow:hidden;">Display in Data Box</div>
<div class="abs" style="left:501px;top:684px;white-space:pre;font-size:11.8px;color:#000;font-weight:bold;line-height:14px;">True</div>
<div class="abs" style="left:381px;top:699px;width:116px;height:15px;background:#c8c8c8;"></div>
<div class="abs" style="left:381px;top:714px;width:264px;height:1px;background:#d4d4d4;"></div>
<div class="abs" style="left:497px;top:699px;width:1px;height:15px;background:#d0d0d0;"></div>
<div class="abs" style="left:384px;top:700px;white-space:pre;font-size:11.4px;color:#000;line-height:14px;width:112px;overflow:hidden;">Label</div>
<div class="abs" style="left:501px;top:700px;white-space:pre;font-size:11.8px;color:#000;font-weight:bold;line-height:14px;">MT UMA</div>
<div class="abs" style="left:381px;top:715px;width:116px;height:15px;background:#fff;"></div>
<div class="abs" style="left:381px;top:730px;width:264px;height:1px;background:#d4d4d4;"></div>
<div class="abs" style="left:497px;top:715px;width:1px;height:15px;background:#d0d0d0;"></div>
<div class="abs" style="left:384px;top:716px;white-space:pre;font-size:11.4px;color:#000;line-height:14px;width:112px;overflow:hidden;">Panel</div>
<div class="abs" style="left:501px;top:716px;white-space:pre;font-size:11.8px;color:#000;font-weight:bold;line-height:14px;">Same as input series</div>
<div class="abs" style="left:381px;top:731px;width:116px;height:15px;background:#fff;"></div>
<div class="abs" style="left:381px;top:746px;width:264px;height:1px;background:#d4d4d4;"></div>
<div class="abs" style="left:497px;top:731px;width:1px;height:15px;background:#d0d0d0;"></div>
<div class="abs" style="left:384px;top:732px;white-space:pre;font-size:11.4px;color:#000;line-height:14px;width:112px;overflow:hidden;">Price marker(s)</div>
<div class="abs" style="left:501px;top:732px;white-space:pre;font-size:11.8px;color:#000;font-weight:bold;line-height:14px;">True</div>
<div class="abs" style="left:381px;top:747px;width:116px;height:15px;background:#fff;"></div>
<div class="abs" style="left:381px;top:762px;width:264px;height:1px;background:#d4d4d4;"></div>
<div class="abs" style="left:497px;top:747px;width:1px;height:15px;background:#d0d0d0;"></div>
<div class="abs" style="left:384px;top:748px;white-space:pre;font-size:11.4px;color:#000;line-height:14px;width:112px;overflow:hidden;">Scale justification</div>
<div class="abs" style="left:501px;top:748px;white-space:pre;font-size:11.8px;color:#000;font-weight:bold;line-height:14px;">Right</div>
<div class="abs" style="left:367px;top:763px;width:278px;height:16px;background:#c8c8c8;"></div>
<svg class="abs" style="left:369px;top:766px" width="10" height="10"><rect x="0.5" y="0.5" width="8" height="8" fill="#f4f4f4" stroke="#000"/><path d="M2 4.5H7" stroke="#000"/></svg>
<div class="abs" style="left:384px;top:764px;white-space:pre;font-size:11.4px;color:#000;font-weight:bold;line-height:14px;">Plots</div>
<div class="abs" style="left:381px;top:779px;width:116px;height:15px;background:#fff;"></div>
<div class="abs" style="left:381px;top:794px;width:264px;height:1px;background:#d4d4d4;"></div>
<div class="abs" style="left:497px;top:779px;width:1px;height:15px;background:#d0d0d0;"></div>
<div class="abs" style="left:384px;top:780px;white-space:pre;font-size:11.4px;color:#000;line-height:14px;width:112px;overflow:hidden;">UMA</div>
<svg class="abs" style="left:369px;top:782px" width="10" height="10"><rect x="0.5" y="0.5" width="8" height="8" fill="#f4f4f4" stroke="#000"/><path d="M2 4.5H7M4.5 2V7" stroke="#000"/></svg>
<svg class="abs" style="left:499px;top:780px" width="21" height="14"><rect x="0.5" y="1.5" width="19" height="11" fill="#fff" stroke="#000"/><polyline points="2,11 7,5 11,8 18,2" fill="none" stroke="#800080" stroke-width="1.6"/></svg>
<div class="abs" style="left:527px;top:780px;white-space:pre;font-size:11.8px;color:#000;font-weight:bold;line-height:14px;">Line; Solid; 1px</div>
<div class="abs" style="left:366px;top:896px;width:279px;height:59px;background:#f0f0f0;box-sizing:border-box;border:1px solid #a0a0a0;"></div>
<div class="abs" style="left:371px;top:900px;white-space:pre;font-size:11.4px;color:#000;font-weight:bold;line-height:14px;">Label</div>
<div class="abs" style="left:371px;top:914px;white-space:pre;font-size:11.2px;color:#000;line-height:13.5px;">MicroTrends Ultimate Moving Average UMA version</div>
<div class="abs" style="left:371px;top:927px;white-space:pre;font-size:11.2px;color:#000;line-height:13.5px;letter-spacing:-0.25px;">7.0.1.68  -  Copyright  2010,2011,2012,2013,2014 Mic...</div>
<svg class="abs" style="left:634px;top:1010px" width="12" height="12"><g fill="#a0a0a0"><rect x="8" y="2" width="2" height="2"/><rect x="5" y="5" width="2" height="2"/><rect x="8" y="5" width="2" height="2"/><rect x="2" y="8" width="2" height="2"/><rect x="5" y="8" width="2" height="2"/><rect x="8" y="8" width="2" height="2"/></g></svg>
</body></html>
